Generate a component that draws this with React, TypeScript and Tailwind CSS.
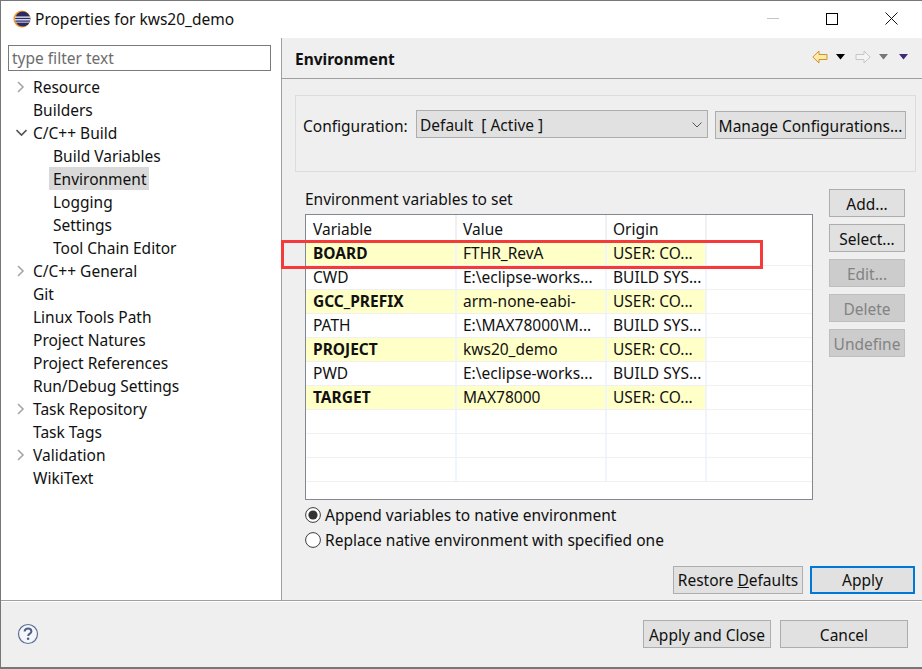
import React from "react";

const font = { fontFamily: '"Noto Sans", "Liberation Sans", sans-serif' };

const tree: [string, number, "r" | "d" | null, boolean?][] = [
  ["Resource", 0, "r"],
  ["Builders", 0, null],
  ["C/C++ Build", 0, "d"],
  ["Build Variables", 1, null],
  ["Environment", 1, null, true],
  ["Logging", 1, null],
  ["Settings", 1, null],
  ["Tool Chain Editor", 1, null],
  ["C/C++ General", 0, "r"],
  ["Git", 0, null],
  ["Linux Tools Path", 0, null],
  ["Project Natures", 0, null],
  ["Project References", 0, null],
  ["Run/Debug Settings", 0, null],
  ["Task Repository", 0, "r"],
  ["Task Tags", 0, null],
  ["Validation", 0, "r"],
  ["WikiText", 0, null],
];

const rows: [string, string, string, boolean][] = [
  ["BOARD", "FTHR_RevA", "USER: CO...", true],
  ["CWD", "E:\\eclipse-works...", "BUILD SYS...", false],
  ["GCC_PREFIX", "arm-none-eabi-", "USER: CO...", true],
  ["PATH", "E:\\MAX78000\\M...", "BUILD SYS...", false],
  ["PROJECT", "kws20_demo", "USER: CO...", true],
  ["PWD", "E:\\eclipse-works...", "BUILD SYS...", false],
  ["TARGET", "MAX78000", "USER: CO...", true],
  ["", "", "", false],
  ["", "", "", false],
  ["", "", "", false],
];

function Btn({ children, disabled, className = "" }: { children: React.ReactNode; disabled?: boolean; className?: string }) {
  return (
    <div
      className={
        "flex h-[28px] items-center justify-center border whitespace-nowrap " +
        (disabled ? "border-[#bfbfbf] bg-[#cccccc] text-[#838383] " : "border-[#adadad] bg-[#e1e1e1] text-[#101010] ") +
        className
      }
    >
      {children}
    </div>
  );
}

function Tri({ color }: { color: string }) {
  return (
    <svg width="9" height="6" viewBox="0 0 9 6">
      <path d="M0 0H9L4.5 5.5Z" fill={color} />
    </svg>
  );
}

function Radio({ on, label }: { on?: boolean; label: string }) {
  return (
    <div className="flex h-[25px] items-center">
      <svg width="16" height="16" viewBox="0 0 16 16" className="mr-[4px]">
        <circle cx="8" cy="8" r="7.4" fill="#fff" stroke="#3c3c3c" strokeWidth="1" />
        {on && <circle cx="8" cy="8" r="4.6" fill="#333" />}
      </svg>
      <span className="text-[#101010]">{label}</span>
    </div>
  );
}

export default function App() {
  return (
    <div style={font} className="relative flex h-[669px] w-[922px] flex-col overflow-hidden border-t border-l border-b-2 border-[#777777] bg-white text-[15.5px] leading-[20px] text-[#111111]">
      {/* title bar */}
      <div className="flex h-[37px] shrink-0 items-center bg-white pb-[2px]">
        <svg width="20" height="20" viewBox="0 0 20 20" className="ml-[11px] mr-[3px]">
          <circle cx="10" cy="10" r="8.6" fill="#f39a2b" />
          <circle cx="10.8" cy="10" r="7.6" fill="#2c2a63" />
          <rect x="3" y="7.4" width="15.5" height="1.5" fill="#d5d5ea" />
          <rect x="2.8" y="10" width="15.8" height="1.5" fill="#d5d5ea" />
          <rect x="3.4" y="12.6" width="14.6" height="1.2" fill="#b7b7d4" />
        </svg>
        <span>Properties for kws20_demo</span>
        <div className="ml-auto flex items-center">
          <div className="mr-[47px] h-px w-[12px] bg-[#c4c4c4]" />
          <div className="mr-[47px] h-[12px] w-[12px] border border-black" />
          <svg width="13" height="13" viewBox="0 0 13 13" className="mr-[24px]">
            <path d="M.5.5L12.5 12.5M12.5.5L.5 12.5" stroke="#111" strokeWidth="1" />
          </svg>
        </div>
      </div>

      <div className="flex min-h-0 flex-1">
        {/* left */}
        <div className="flex w-[280px] shrink-0 flex-col bg-white pt-[7px]">
          <div className="ml-[7px] flex h-[26px] w-[263px] items-center border border-[#7a7a7a] px-[3px] text-[#6d6d6d]">type filter text</div>
          <div className="mt-[4px] flex flex-col">
            {tree.map(([label, lvl, arrow, sel]) => (
              <div key={label} className={"flex h-[23px] items-center " + (lvl ? "pl-[48px]" : "pl-[15px]")}>
                {!lvl && (
                  <span className="flex w-[17px] items-center">
                    {arrow === "r" && (
                      <svg width="10" height="12" viewBox="0 0 10 12">
                        <path d="M2 1L7 6L2 11" fill="none" stroke="#a6a6a6" strokeWidth="1.6" />
                      </svg>
                    )}
                    {arrow === "d" && (
                      <svg width="11" height="8" viewBox="0 0 11 8">
                        <path d="M.5 1L5.5 6L10.5 1" fill="none" stroke="#555" strokeWidth="1.6" />
                      </svg>
                    )}
                  </span>
                )}
                <span className={"flex h-[23px] items-center whitespace-nowrap " + (lvl ? "px-[4px] " : "") + (sel ? "w-[100px] bg-[#d9d9d9]" : "")}>{label}</span>
              </div>
            ))}
          </div>
        </div>

        {/* right */}
        <div className="flex min-w-0 flex-1 flex-col border-l border-[#a0a0a0] bg-[#efefef]">
          <div className="flex h-[41px] shrink-0 items-center border-b border-[#a0a0a0] pl-[13px] pr-[14px]">
            <span className="mt-[2px] font-bold">Environment</span>
            <div className="mb-[3px] ml-auto flex items-center">
              <svg width="16" height="14" viewBox="0 0 16 14">
                <path d="M.8 7L7 1V4.5H15V9.5H7V13Z" fill="#fdeaa8" stroke="#cf9330" strokeWidth="1" />
              </svg>
              <span className="ml-[8px] flex"><Tri color="#000" /></span>
              <svg width="16" height="14" viewBox="0 0 16 14" className="ml-[10px]">
                <path d="M15.2 7L9 1V4.5H1V9.5H9V13Z" fill="#f4f4f4" stroke="#c6c6c6" strokeWidth="1" />
              </svg>
              <span className="ml-[8px] flex"><Tri color="#777" /></span>
              <span className="ml-[11px] flex"><Tri color="#3f2a7a" /></span>
            </div>
          </div>

          <div className="flex min-h-0 flex-1 flex-col pl-[13px] pr-[6px] pt-[16px]">
            {/* config group */}
            <div className="flex h-[77px] shrink-0 items-start border border-[#dcdcdc] pl-[7px] pt-[14px]">
              <span className="mt-[6px] w-[113px] whitespace-nowrap">Configuration:</span>
              <div className="flex h-[28px] w-[292px] items-center justify-between border border-[#adadad] bg-[#e1e1e1] pl-[3px] pr-[5px] pt-[2px]">
                <span>Default&nbsp; [ Active ]</span>
                <svg width="10" height="6" viewBox="0 0 10 6">
                  <path d="M.5.5L5 5L9.5.5" fill="none" stroke="#555" strokeWidth="1" />
                </svg>
              </div>
              <Btn className="ml-[7px] mt-[1px] w-[191px] pt-[2px]">Manage Configurations...</Btn>
            </div>

            {/* middle */}
            <div className="mt-[17px] flex min-h-0 flex-1 pl-[10px]">
              <div className="flex w-[508px] shrink-0 flex-col">
                <span className="h-[25px] leading-[20px]">Environment variables to set</span>
                <div className="flex h-[286px] flex-col overflow-hidden border border-[#828790] bg-white">
                  <div className="flex h-[27px] shrink-0">
                    <span className="w-[151px] border-r-2 border-[#f0f0f0] pl-[7px] pt-[4px]">Variable</span>
                    <span className="w-[150px] border-r-2 border-[#f0f0f0] pl-[6px] pt-[4px]">Value</span>
                    <span className="w-[100px] border-r-2 border-[#f0f0f0] pl-[6px] pt-[4px]">Origin</span>
                  </div>
                  {rows.map(([a, b, c, user], i) => (
                    <div key={i} className="flex h-[24px] shrink-0 border-b border-[#f0f0f0]">
                      <span className={"w-[151px] border-r-2 border-[#f0f4fb] pl-[7px] pt-[1px] " + (user ? "bg-[#ffffc8] font-bold" : "")}>{a}</span>
                      <span className={"w-[150px] border-r-2 border-[#f0f4fb] whitespace-nowrap pl-[6px] pt-[1px] " + (user ? "bg-[#ffffc8]" : "")}>{b}</span>
                      <span className={"w-[100px] border-r-2 border-[#f0f4fb] whitespace-nowrap pl-[6px] pt-[1px] " + (user ? "bg-[#ffffc8]" : "")}>{c}</span>
                    </div>
                  ))}
                </div>
                <div className="mt-[2px] flex flex-col">
                  <Radio on label="Append variables to native environment" />
                  <Radio label="Replace native environment with specified one" />
                </div>
              </div>
              <div className="ml-[16px] flex w-[76px] shrink-0 flex-col gap-[7px]">
                <Btn className="pt-[2px]">Add...</Btn>
                <Btn className="pt-[2px]">Select...</Btn>
                <Btn disabled className="pt-[2px]">Edit...</Btn>
                <Btn disabled className="pt-[2px]">Delete</Btn>
                <Btn disabled className="pt-[2px]">Undefine</Btn>
              </div>
            </div>

            {/* restore */}
            <div className="mr-[1px] flex h-[34px] shrink-0 justify-end gap-[7px]">
              <Btn className="w-[130px]">
                <span>Restore <span className="underline">D</span>efaults</span>
              </Btn>
              <div className="flex h-[28px] w-[105px] items-center justify-center border-2 border-[#0078d7] bg-[#e1e1e1] text-[#101010]">Apply</div>
            </div>
          </div>
        </div>
      </div>

      {/* footer */}
      <div className="flex h-[67px] shrink-0 items-center border-t border-[#a0a0a0] bg-[#efefef] pr-[14px] shadow-[inset_0_1px_0_#ffffff]">
        <svg width="22" height="22" viewBox="0 0 22 22" className="ml-[16px]">
          <circle cx="11" cy="11" r="9.5" fill="#f4f6fa" stroke="#5c7095" strokeWidth="1.2" />
          <path d="M7.6 8.6C7.6 6.6 9.2 5.6 11 5.6C13 5.6 14.4 6.8 14.4 8.4C14.4 10.6 11.2 10.6 11.2 13" fill="none" stroke="#4d6187" strokeWidth="2" />
          <circle cx="11.1" cy="15.8" r="1.3" fill="#4d6187" />
        </svg>
        <div className="ml-auto flex gap-[9px]">
          <Btn className="w-[128px] pt-[2px]">Apply and Close</Btn>
          <Btn className="w-[128px] pt-[2px]">Cancel</Btn>
        </div>
      </div>

      {/* red annotation */}
      <div className="pointer-events-none absolute left-[280px] top-[239px] h-[29px] w-[482px] border-[3px] border-[#f43a3a]" />
    </div>
  );
}
